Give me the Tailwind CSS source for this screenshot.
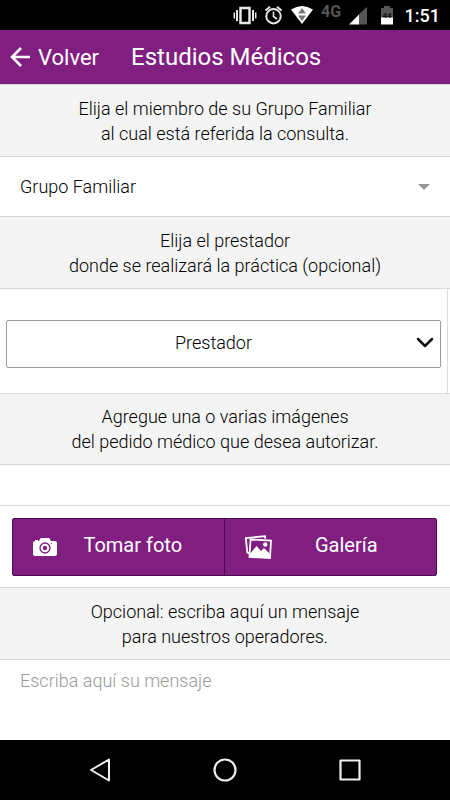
<!DOCTYPE html>
<html lang="es">
<head>
<meta charset="utf-8">
<meta name="viewport" content="width=device-width, initial-scale=1">
<title>Estudios Médicos</title>
<script src="https://cdn.jsdelivr.net/npm/@tailwindcss/browser@4"></script>
</head>
<body class="flex min-h-screen flex-col bg-white font-[Roboto,sans-serif] text-lg leading-[25px] font-light text-black">

<div class="flex h-[30px] shrink-0 items-center justify-end bg-black pr-[10px] text-white">
  <svg class="h-[30px] w-[165px]" viewBox="0 0 165 30" fill="none" aria-hidden="true">
    <g stroke="#e6e6e6" stroke-width="2">
      <rect x="8.500" y="8" width="9" height="15" stroke-width="2.500"/>
      <path d="M5 10v11M21 10v11" stroke-width="2"/>
      <path d="M2.300 12.500v6M23.700 12.500v6" stroke-width="1.500"/>
      <circle cx="41.500" cy="16.200" r="7.200"/>
      <path d="M41.500 11.500V16.500l3.500 2.500" stroke-width="1.600"/>
      <path d="M33.500 10.500l4.500-3.800M49.500 10.500l-4.500-3.800"/>
    </g>
    <path d="M59 9.500Q70 2.500 81 9.500L70 24Z" fill="#fff"/>
    <path d="M66 13.500l4-5.500 4 5.500ZM66 15.500h8l-4 5.500Z" fill="#777"/>
    <text x="89" y="16.500" font-family="Roboto" font-weight="700" font-size="16" fill="#555">4G</text>
    <path d="M135 7v17.500h-8V14Z" fill="#555"/>
    <path d="M117 24.500L127 14.500v10Z" fill="#fff"/>
    <path d="M149 8h3V6h6v2h3v10h-12Z" fill="#555"/>
    <path d="M149 17.500h12v7h-12Z" fill="#fff"/>
    <text x="155" y="17.500" font-family="Roboto" font-weight="700" font-size="8" fill="#111" text-anchor="middle">44</text>
  </svg>
  <span class="w-[43px] whitespace-nowrap pt-[2px] text-right text-lg font-medium">1:51</span>
</div>

<header class="flex h-[54px] shrink-0 items-center bg-[#811f81] pl-[10px] font-normal text-white">
  <button type="button" class="flex items-center gap-2 text-[22px]">
    <svg class="h-5 w-5" viewBox="0 0 20 20" fill="none" stroke="#fff" stroke-width="2.500" aria-hidden="true"><path d="M20 10H2M11 1L2 10l9 9"/></svg>
    <span>Volver</span>
  </button>
  <h1 class="ml-8 text-2xl">Estudios Médicos</h1>
</header>

<main class="flex flex-1 flex-col">
  <label for="miembro" class="border-y border-[#d8d8d8] bg-[#f4f4f4] px-4 pt-[11px] pb-[10px] text-center">Elija el miembro de su Grupo Familiar<br>al cual está referida la consulta.</label>
  <div class="relative">
    <select id="miembro" class="block h-[59px] w-full appearance-none bg-white pr-12 pl-5">
      <option>Grupo Familiar</option>
    </select>
    <svg class="pointer-events-none absolute top-[27px] right-5 h-[6px] w-3" viewBox="0 0 12 6" aria-hidden="true"><path d="M0 0h12L6 6Z" fill="#999"/></svg>
  </div>

  <label for="prestador" class="border-y border-[#d8d8d8] bg-[#f4f4f4] px-4 pt-[11px] pb-[10px] text-center">Elija el prestador<br>donde se realizará la práctica (opcional)</label>
  <div class="mr-[2px] border-r border-[#ddd] pt-[31px] pr-[6px] pb-[25px] pl-[6px]">
    <div class="relative">
      <select id="prestador" class="block h-12 w-full appearance-none rounded-xs border border-[#999] bg-white pr-6 pb-1 pl-1 text-center [text-align-last:center]">
        <option>Prestador</option>
      </select>
      <svg class="pointer-events-none absolute top-[17px] right-[7px] h-[11px] w-[18px]" viewBox="0 0 18 11" fill="none" stroke="#111" stroke-width="2.500" stroke-linecap="round" stroke-linejoin="round" aria-hidden="true"><path d="M2 2l7 7 7-7"/></svg>
    </div>
  </div>

  <h2 class="border-y border-[#d8d8d8] bg-[#f4f4f4] px-4 py-[10px] text-center">Agregue una o varias imágenes<br>del pedido médico que desea autorizar.</h2>
  <div class="h-10 shrink-0"></div>
  <div class="border-t border-[#d8d8d8] pt-3 pr-[13px] pb-[11px] pl-3">
    <div class="grid h-[58px] grid-cols-2 overflow-hidden rounded-xs border border-[#4b0b50] bg-[#811f81] text-xl font-normal text-white">
      <button type="button" class="flex items-center border-r border-[#4b0b50] pr-[15px] pl-5">
        <svg class="h-[18px] w-6 shrink-0" viewBox="0 0 24 18" aria-hidden="true">
          <path d="M2 3Q0 3 0 5v11q0 2 2 2h20q2 0 2-2V5q0-2-2-2h-4l-1-2q-.5-1-1.500-1h-7Q7.500 0 7 1L6 3H5V2H2Z" fill="#fff"/>
          <circle cx="12" cy="10" r="5" fill="none" stroke="#811f81" stroke-width="1.300"/>
          <circle cx="12" cy="10" r="2.200" fill="#811f81"/><circle cx="18.500" cy="5.500" r=".6" fill="#811f81"/>
        </svg>
        <span class="flex-1 pb-1 text-center">Tomar foto</span>
      </button>
      <button type="button" class="flex items-center pr-[15px] pl-5">
        <svg class="h-6 w-[27px] shrink-0" viewBox="0 0 27 24" fill="none" stroke="#fff" aria-hidden="true">
          <path d="M4.500 18L2.300 17.500L.8 3L20 1.200l.3 2.500" stroke-width="1.800"/>
          <path d="M5.500 4.500l20.500 1-1 17.500-20.500-1Z" stroke-width="1.800"/>
          <path d="M5 19l6.500-8 4.500 5 3-3 6 6v4L5 22Z" fill="#fff" stroke="none"/>
          <circle cx="20.300" cy="9.500" r="2.200" fill="#fff" stroke="none"/>
        </svg>
        <span class="flex-1 pb-1 text-center">Galería</span>
      </button>
    </div>
  </div>

  <label for="mensaje" class="border-y border-[#d8d8d8] bg-[#f4f4f4] px-4 pt-[11px] pb-[10px] text-center">Opcional: escriba aquí un mensaje<br>para nuestros operadores.</label>
  <textarea id="mensaje" placeholder="Escriba aquí su mensaje" class="min-h-[60px] flex-1 resize-none px-5 pt-2 outline-none placeholder:text-[#999]"></textarea>
</main>

<nav class="flex h-[60px] shrink-0 items-center justify-center gap-[101px] bg-black">
  <button type="button" aria-label="Atrás"><svg class="block h-6 w-6" viewBox="0 0 24 24" fill="none" stroke="#eee" stroke-width="2" stroke-linejoin="round"><path d="M3 12L21 1.500v21Z"/></svg></button>
  <button type="button" aria-label="Inicio"><svg class="block h-6 w-6" viewBox="0 0 24 24" fill="none" stroke="#eee" stroke-width="2.200"><circle cx="12" cy="12" r="10.500"/></svg></button>
  <button type="button" aria-label="Recientes"><svg class="block h-6 w-6" viewBox="0 0 24 24" fill="none" stroke="#eee" stroke-width="2.200" stroke-linejoin="round"><rect x="2.500" y="2.500" width="19" height="19"/></svg></button>
</nav>
</body>
</html>
